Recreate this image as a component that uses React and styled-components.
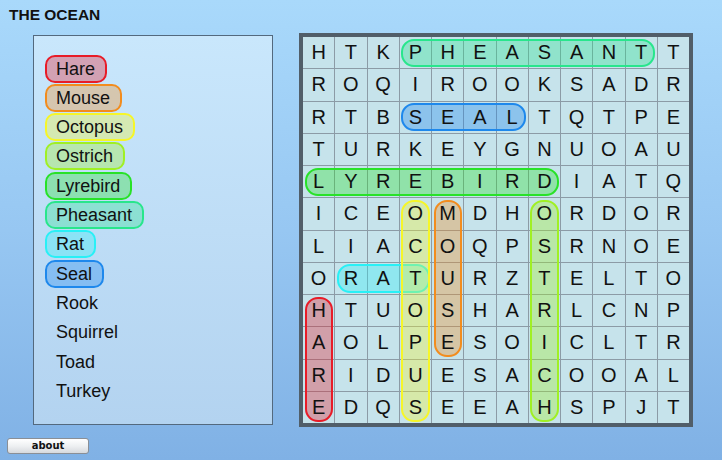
import React from "react";
import styled, { createGlobalStyle } from "styled-components";

const GRID = [
  "HTKPHEASANTT",
  "ROQIROOKSADR",
  "RTBSEALTQTPE",
  "TURKEYGNUOAU",
  "LYREBIRDIATQ",
  "ICEOMDHORDOR",
  "LIACOQPSRNOE",
  "ORATURZTELTO",
  "HTUOSHARLCNP",
  "AOLPESOICLTR",
  "RIDUESACOOAL",
  "EDQSEEAHSPJT",
];

const COLORS = {
  Hare: [232, 28, 40],
  Mouse: [242, 140, 30],
  Octopus: [246, 246, 40],
  Ostrich: [160, 240, 36],
  Lyrebird: [40, 226, 40],
  Pheasant: [40, 230, 140],
  Rat: [40, 240, 246],
  Seal: [30, 136, 236],
};

const WORDS = [
  "Hare",
  "Mouse",
  "Octopus",
  "Ostrich",
  "Lyrebird",
  "Pheasant",
  "Rat",
  "Seal",
  "Rook",
  "Squirrel",
  "Toad",
  "Turkey",
];

const FOUND = [
  { word: "Pheasant", row: 0, col: 3, len: 8, dir: "h" },
  { word: "Seal", row: 2, col: 3, len: 4, dir: "h" },
  { word: "Lyrebird", row: 4, col: 0, len: 8, dir: "h" },
  { word: "Rat", row: 7, col: 1, len: 3, dir: "h" },
  { word: "Hare", row: 8, col: 0, len: 4, dir: "v" },
  { word: "Octopus", row: 5, col: 3, len: 7, dir: "v" },
  { word: "Mouse", row: 5, col: 4, len: 5, dir: "v" },
  { word: "Ostrich", row: 5, col: 7, len: 7, dir: "v" },
];

const PITCH = 32.25;
const CELL = 31.25;
const INSET = 1.5;

const GlobalStyle = createGlobalStyle`
  html, body {
    margin: 0;
    padding: 0;
  }
  body {
    font-family: "Liberation Sans", Arial, sans-serif;
  }
`;

const Page = styled.div`
  width: 722px;
  height: 460px;
  overflow: hidden;
  background: linear-gradient(to bottom, #a9d9fb 0%, #97c7f2 50%, #80b1e5 100%);
  display: flex;
  flex-direction: column;
`;

const Title = styled.h1`
  margin: 6px 0 0 9px;
  font-size: 15.5px;
  line-height: 18px;
  font-weight: bold;
  color: #111;
`;

const Content = styled.div`
  display: flex;
  align-items: flex-start;
  margin-top: 9px;
  padding-left: 33px;
`;

const Panel = styled.div`
  box-sizing: border-box;
  width: 240px;
  height: 390px;
  margin-top: 2px;
  border: 1px solid #53697e;
  background: linear-gradient(to bottom, #c9e7fc 0%, #b3d3f0 100%);
  padding: 18.5px 0 0 11px;
  display: flex;
  flex-direction: column;
  align-items: flex-start;
  gap: 1.33px;
`;

const Word = styled.div`
  box-sizing: border-box;
  height: 28px;
  padding: 0 9.5px 0 9px;
  border: 2px solid ${(p) => (p.$c ? `rgb(${p.$c.join(",")})` : "transparent")};
  background: ${(p) => (p.$c ? `rgba(${p.$c.join(",")},0.34)` : "transparent")};
  border-radius: 10px;
  font-size: 18px;
  line-height: 24px;
  color: #111;
`;

const Board = styled.div`
  position: relative;
  margin-left: 26px;
  width: 386px;
  height: 386px;
  border: 4px solid #515e69;
  background: #8c9ba6;
  display: grid;
  grid-template-columns: repeat(12, 1fr);
  grid-template-rows: repeat(12, 1fr);
  gap: 1px;
`;

const Cell = styled.div`
  background: #c6e3eb;
  display: flex;
  align-items: center;
  justify-content: center;
  font-size: 20px;
  color: #111;
`;

const Letter = styled.span`
  position: relative;
  z-index: 2;
`;

const Mark = styled.div`
  position: absolute;
  z-index: 1;
  box-sizing: border-box;
  border: 2px solid ${(p) => `rgb(${p.$c.join(",")})`};
  background: ${(p) => `rgba(${p.$c.join(",")},0.34)`};
  border-radius: 13px;
  pointer-events: none;
`;

const Footer = styled.div`
  margin-top: 8px;
  padding-left: 7px;
`;

const AboutButton = styled.button`
  box-sizing: border-box;
  width: 82px;
  height: 16px;
  padding: 0;
  border: 1px solid #8a8f96;
  border-radius: 3px;
  background: linear-gradient(to bottom, #ffffff 0%, #eef0f2 50%, #d6d9dd 100%);
  font-family: "DejaVu Sans", Verdana, sans-serif;
  font-weight: bold;
  font-size: 10px;
  line-height: 14px;
  color: #111;
`;

function markStyle(f) {
  const len = f.len * PITCH - 1 - INSET * 2;
  const thick = CELL - INSET * 2;
  return {
    left: f.col * PITCH + INSET,
    top: f.row * PITCH + INSET,
    width: f.dir === "h" ? len : thick,
    height: f.dir === "v" ? len : thick,
  };
}

export default function App() {
  const found = new Set(FOUND.map((f) => f.word));
  return (
    <>
      <GlobalStyle />
      <Page>
        <Title>THE OCEAN</Title>
        <Content>
          <Panel>
            {WORDS.map((w) => (
              <Word key={w} $c={found.has(w) ? COLORS[w] : null}>
                {w}
              </Word>
            ))}
          </Panel>
          <Board>
            {GRID.map((row, r) =>
              row.split("").map((ch, c) => (
                <Cell key={`${r}-${c}`}>
                  <Letter>{ch}</Letter>
                </Cell>
              ))
            )}
            {FOUND.map((f) => (
              <Mark key={f.word} $c={COLORS[f.word]} style={markStyle(f)} />
            ))}
          </Board>
        </Content>
        <Footer>
          <AboutButton>about</AboutButton>
        </Footer>
      </Page>
    </>
  );
}
